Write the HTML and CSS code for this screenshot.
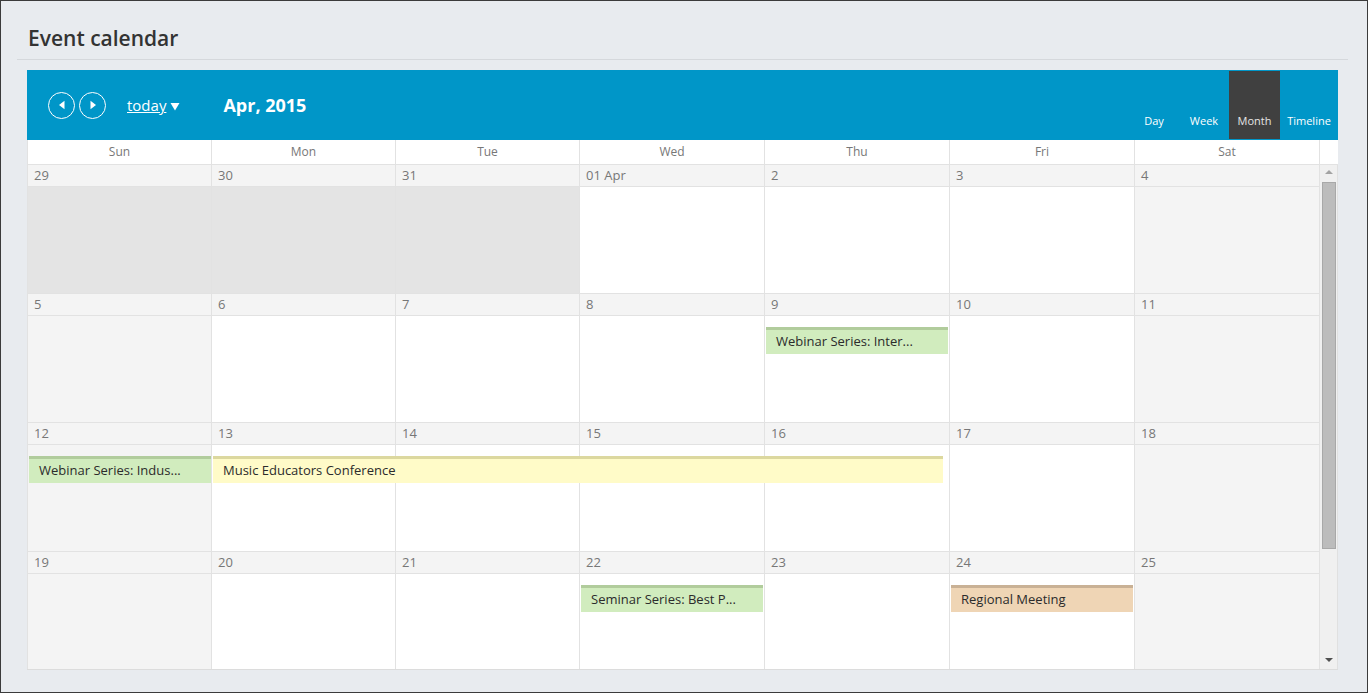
FILE: index.html
```html
<!DOCTYPE html>
<html>
<head>
<meta charset="utf-8">
<title>Event calendar</title>
<link rel="stylesheet" href="styles.css">
</head>
<body>
<div class="page">
  <div class="title-bar"><h1 class="title">Event calendar</h1></div>
  <div class="calendar">
    <div class="toolbar">
      <div class="nav">
        <span class="circle"><svg width="10" height="10" viewBox="0 0 10 10"><path d="M7.5 0.8 L7.5 9.2 L2 5 Z" fill="#fff"/></svg></span>
        <span class="circle"><svg width="10" height="10" viewBox="0 0 10 10"><path d="M2.5 0.8 L2.5 9.2 L8 5 Z" fill="#fff"/></svg></span>
        <span class="today">today</span>
        <svg class="caret" width="10" height="9" viewBox="0 0 10 9"><path d="M0.5 1 L9.5 1 L5 8.5 Z" fill="#fff"/></svg>
        <span class="period">Apr, 2015</span>
      </div>
      <div class="views">
        <div class="view v-day">Day</div>
        <div class="view v-week">Week</div>
        <div class="view v-month active">Month</div>
        <div class="view v-timeline">Timeline</div>
      </div>
    </div>
    <div class="dayheads">
      <div class="dh">Sun</div><div class="dh">Mon</div><div class="dh">Tue</div><div class="dh">Wed</div><div class="dh">Thu</div><div class="dh">Fri</div><div class="dh">Sat</div>
      <div class="dh-spacer"></div>
    </div>
    <div class="cal-body">
      <div class="weeks">
        <div class="week">
          <div class="dn">29</div><div class="dn">30</div><div class="dn">31</div><div class="dn">01 Apr</div><div class="dn">2</div><div class="dn">3</div><div class="dn">4</div>
          <div class="cell other"></div><div class="cell other"></div><div class="cell other"></div><div class="cell"></div><div class="cell"></div><div class="cell"></div><div class="cell weekend"></div>
        </div>
        <div class="week">
          <div class="dn">5</div><div class="dn">6</div><div class="dn">7</div><div class="dn">8</div><div class="dn">9</div><div class="dn">10</div><div class="dn">11</div>
          <div class="cell weekend"></div><div class="cell"></div><div class="cell"></div><div class="cell"></div><div class="cell"></div><div class="cell"></div><div class="cell weekend"></div>
          <div class="event green c5">Webinar Series: Inter...</div>
        </div>
        <div class="week">
          <div class="dn">12</div><div class="dn">13</div><div class="dn">14</div><div class="dn">15</div><div class="dn">16</div><div class="dn">17</div><div class="dn">18</div>
          <div class="cell weekend"></div><div class="cell"></div><div class="cell"></div><div class="cell"></div><div class="cell"></div><div class="cell"></div><div class="cell weekend"></div>
          <div class="event green c1 first">Webinar Series: Indus...</div>
          <div class="event yellow c2-5">Music Educators Conference</div>
        </div>
        <div class="week">
          <div class="dn">19</div><div class="dn">20</div><div class="dn">21</div><div class="dn">22</div><div class="dn">23</div><div class="dn">24</div><div class="dn">25</div>
          <div class="cell weekend"></div><div class="cell"></div><div class="cell"></div><div class="cell"></div><div class="cell"></div><div class="cell"></div><div class="cell weekend"></div>
          <div class="event green c4">Seminar Series: Best P...</div>
          <div class="event orange c6">Regional Meeting</div>
        </div>
      </div>
      <div class="scrollbar">
        <div class="arrow-up"></div>
        <div class="thumb"></div>
        <div class="arrow-down"></div>
      </div>
    </div>
  </div>
</div>
</body>
</html>
```
FILE: styles.css
```css
* { box-sizing: border-box; }
html, body { margin: 0; padding: 0; }
body {
  font-family: "Open Sans", "Liberation Sans", sans-serif;
  background: #e8ebef;
}
.page {
  width: 1368px;
  height: 693px;
  border: 1px solid #3b3b3b;
  background: #e8ebef;
  overflow: hidden;
}
.title-bar {
  margin: 0 19px 0 16px;
  height: 59px;
  border-bottom: 1px solid #d5d8dc;
  padding: 22px 0 0 11px;
}
.title {
  margin: 0;
  font-size: 21px;
  line-height: 30px;
  font-weight: 600;
  color: #333;
}
.calendar {
  margin: 10px 0 0 26px;
  width: 1311px;
  background: #fff;
}
.toolbar {
  height: 70px;
  background: #0096c8;
  display: flex;
  justify-content: space-between;
}
.nav {
  display: flex;
  align-items: center;
  padding-left: 21px;
  color: #fff;
}
.circle {
  width: 27px;
  height: 27px;
  border: 1px solid #fff;
  border-radius: 50%;
  display: flex;
  align-items: center;
  justify-content: center;
  margin-right: 4px;
}
.today {
  margin-left: 17px;
  font-size: 15px;
  text-decoration: underline;
  line-height: 20px;
}
.caret { margin-left: 4px; margin-top: 2px; }
.period {
  margin-left: 43px;
  font-size: 18px;
  font-weight: 700;
  line-height: 24px;
}
.views {
  display: flex;
  align-items: stretch;
  padding: 1px 0;
}
.view {
  display: flex;
  align-items: flex-end;
  justify-content: center;
  padding-bottom: 11px;
  font-size: 11px;
  line-height: 14px;
  color: #fff;
}
.v-day { width: 50px; }
.v-week { width: 50px; }
.v-month { width: 51px; }
.v-timeline { width: 58px; }
.view.active { background: #404040; color: #e6e6e6; }
.dayheads {
  display: grid;
  grid-template-columns: 184px 184px 184px 185px 185px 185px 185px 19px;
  height: 25px;
  border-bottom: 1px solid #e2e2e2;
}
.dh {
  border-left: 1px solid #e2e2e2;
  text-align: center;
  font-size: 12px;
  line-height: 24px;
  color: #777;
}
.dh-spacer {
  border-left: 1px solid #e2e2e2;
}
.cal-body {
  display: flex;
  height: 505px;
  border-bottom: 1px solid #dcdcdc;
}
.weeks {
  width: 1292px;
  height: 504px;
  overflow: hidden;
}
.week {
  display: grid;
  grid-template-columns: 184px 184px 184px 185px 185px 185px 185px;
  grid-template-rows: 22px 107px;
}
.dn {
  grid-row: 1;
  background: #f4f4f4;
  border-left: 1px solid #e2e2e2;
  border-bottom: 1px solid #e2e2e2;
  font-size: 13px;
  line-height: 21px;
  color: #777;
  padding-left: 6px;
}
.cell {
  grid-row: 2;
  border-left: 1px solid #e2e2e2;
  border-bottom: 1px solid #e2e2e2;
  background: #fff;
}
.week > .cell:nth-child(8) { grid-column: 1; }
.week > .cell:nth-child(9) { grid-column: 2; }
.week > .cell:nth-child(10) { grid-column: 3; }
.week > .cell:nth-child(11) { grid-column: 4; }
.week > .cell:nth-child(12) { grid-column: 5; }
.week > .cell:nth-child(13) { grid-column: 6; }
.week > .cell:nth-child(14) { grid-column: 7; }
.cell.weekend { background: #f4f4f4; }
.cell.other { background: #e4e4e4; }
.event {
  grid-row: 2;
  align-self: start;
  margin: 11px 1px 0 2px;
  height: 27px;
  border-top: 3px solid #b1cc9c;
  font-size: 13px;
  line-height: 23px;
  color: #2b2b2b;
  padding-left: 10px;
  white-space: nowrap;
  overflow: hidden;
}
.event.green { background: #d1ecbe; border-top-color: #b1cc9c; }
.event.yellow { background: #fffbc8; border-top-color: #dcd89f; }
.event.orange { background: #efd5b5; border-top-color: #c9b195; }
.c1 { grid-column: 1; }
.c4 { grid-column: 4; }
.c5 { grid-column: 5; }
.c6 { grid-column: 6; }
.c2-5 { grid-column: 2 / 6; margin-right: 6px; }
.event.first { margin-right: 0; }
.scrollbar {
  width: 19px;
  border-left: 1px solid #e2e2e2;
  border-right: 1px solid #e0e0e0;
  background: #f0f0f0;
  display: flex;
  flex-direction: column;
  align-items: center;
}
.arrow-up {
  margin-top: 5px;
  width: 0;
  height: 0;
  border-left: 4px solid transparent;
  border-right: 4px solid transparent;
  border-bottom: 4px solid #a3a3a3;
}
.thumb {
  margin-top: 8px;
  width: 14px;
  height: 367px;
  background: #bcbcbc;
  border: 1px solid #a8a8a8;
}
.arrow-down {
  margin-top: auto;
  margin-bottom: 7px;
  width: 0;
  height: 0;
  border-left: 4px solid transparent;
  border-right: 4px solid transparent;
  border-top: 4px solid #505050;
}
```
